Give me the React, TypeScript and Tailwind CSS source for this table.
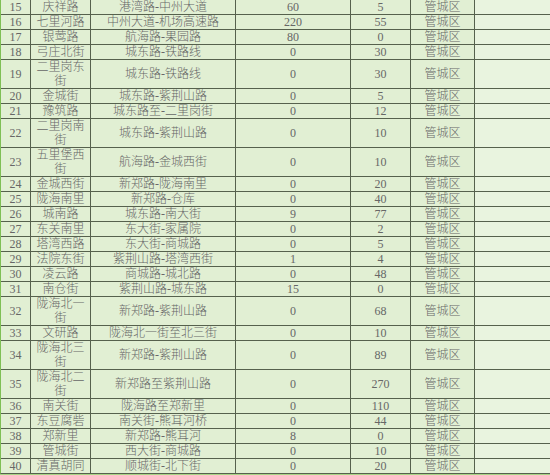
import React from 'react';

// 道路数据：序号、名称、起止点、数值1、数值2、辖区
const rows: Array<[number, string, string, number, number]> = [
  [15, '庆祥路', '港湾路-中州大道', 60, 5],
  [16, '七里河路', '中州大道-机场高速路', 220, 55],
  [17, '银莺路', '航海路-果园路', 80, 0],
  [18, '弓庄北街', '城东路-铁路线', 0, 30],
  [19, '二里岗东街', '城东路-铁路线', 0, 30],
  [20, '金城街', '城东路-紫荆山路', 0, 5],
  [21, '豫筑路', '城东路至-二里岗街', 0, 12],
  [22, '二里岗南街', '城东路-紫荆山路', 0, 10],
  [23, '五里堡西街', '航海路-金城西街', 0, 10],
  [24, '金城西街', '新郑路-陇海南里', 0, 20],
  [25, '陇海南里', '新郑路-仓库', 0, 40],
  [26, '城南路', '城东路-南大街', 9, 77],
  [27, '东关南里', '东大街-家属院', 0, 2],
  [28, '塔湾西路', '东大街-商城路', 0, 5],
  [29, '法院东街', '紫荆山路-塔湾西街', 1, 4],
  [30, '凌云路', '商城路-城北路', 0, 48],
  [31, '南仓街', '紫荆山路-城东路', 15, 0],
  [32, '陇海北一街', '新郑路-紫荆山路', 0, 68],
  [33, '文研路', '陇海北一街至北三街', 0, 10],
  [34, '陇海北三街', '新郑路-紫荆山路', 0, 89],
  [35, '陇海北二街', '新郑路至紫荆山路', 0, 270],
  [36, '南关街', '陇海路至郑新里', 0, 110],
  [37, '东豆腐砦', '南关街-熊耳河桥', 0, 44],
  [38, '郑新里', '新郑路-熊耳河', 8, 0],
  [39, '管城街', '西大街-商城路', 0, 10],
  [40, '清真胡同', '顺城街-北下街', 0, 20],
];

const cell = 'flex items-center justify-center text-center bg-[#e1efd3] leading-[14px]';

export default function App() {
  return (
    <div
      className="w-[550px] h-[475px] overflow-hidden bg-[#a9d486] text-[12px] font-light text-[#676767]"
      style={{ fontFamily: '"Liberation Serif", "Noto Sans CJK SC", serif' }}
    >
      <div className="grid grid-cols-[29px_59px_144px_114px_59px_63px_1fr] gap-px bg-[#56614d] border-l border-l-[#7fbf55] border-b border-b-[#56614d] w-[560px]">
        {rows.map(([no, name, range, a, b]) => (
          <React.Fragment key={no}>
            <div className={`${cell} bg-[#d9eac9]`}>{no}</div>
            <div className={cell}>{name}</div>
            <div className={cell}>{range}</div>
            <div className={cell}>{a}</div>
            <div className={cell}>{b}</div>
            <div className={cell}>管城区</div>
            <div className={`${cell} bg-[#e9f4df]`}></div>
          </React.Fragment>
        ))}
      </div>
    </div>
  );
}
